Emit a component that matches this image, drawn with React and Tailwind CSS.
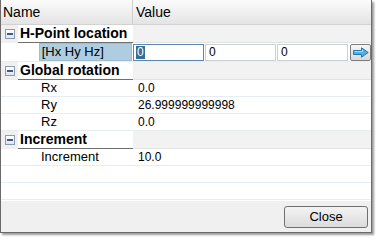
import React from 'react';

const Minus = () => (
  <div className="w-[10px] h-[10px] border border-[#8b9cb1] bg-linear-to-b from-white to-[#dfe5ec] flex items-center justify-center">
    <div className="w-[6px] h-[2px] bg-[#3a5a8c]" />
  </div>
);

const Category = ({ label }) => (
  <div className="flex h-[18px]">
    <div className="w-[17px] bg-[#f0f0f0] flex items-center justify-center">
      <Minus />
    </div>
    <div className="w-[115px] bg-white border-b border-[#6f6f6f] font-bold text-[14px] leading-[17px] pl-[2px] whitespace-nowrap">
      {label}
    </div>
    <div className="flex-1 bg-[#f2f2f2] border-b border-[#e2e2e2]" />
  </div>
);

const Item = ({ name, value }) => (
  <div className="flex h-[17px] border-b border-[#e6eef2] leading-[16px]">
    <div className="w-[132px] pl-[40px] text-[13px]">{name}</div>
    <div className="flex-1 pl-[5px] text-[12px]">{value}</div>
  </div>
);

const Field = ({ children, focused }) => (
  <div
    className={
      focused
        ? 'w-[71px] h-[17px] bg-white border border-[#5d86ad] flex items-center pl-[2px] text-[12px]'
        : 'w-[71px] h-[17px] bg-white border border-[#c9d0d6] flex items-center pl-[3px] text-[12px]'
    }
  >
    {children}
  </div>
);

const Arrow = () => (
  <svg width="16" height="11" viewBox="0 0 16 11">
    <path d="M0.5 3.5 H8.5 V0.8 L15.2 5.5 L8.5 10.2 V7.5 H0.5 Z" fill="#4fb0e4" stroke="#2377ad" strokeWidth="1" />
    <path d="M1.5 4.5 H9.5 V2.8" fill="none" stroke="#a9ddf6" strokeWidth="1" />
  </svg>
);

export default function App() {
  return (
    <div className="w-[379px] h-[240px] bg-white font-[family-name:'Liberation_Sans',Arial,sans-serif] text-black">
      <div className="w-[372px] h-[233px] flex flex-col border-l border-r border-b border-[#6a6a6a] shadow-[2px_2px_2px_rgba(0,0,0,0.4)]">
        {/* header */}
        <div className="flex h-[25px] bg-linear-to-b from-[#fbfbfb] to-[#e4e4e4] border-b border-[#d2d2d2] text-[14px] leading-[24px]">
          <div className="w-[132px] pl-[2px] border-r border-[#cfcfcf]">Name</div>
          <div className="flex-1 pl-[3px]">Value</div>
        </div>

        {/* grid */}
        <div className="flex-1 bg-white">
          <Category label="H-Point location" />
          <div className="flex h-[19px] items-center border-b border-[#e6eef2]">
            <div className="w-[38px]" />
            <div className="w-[94px] h-[18px] bg-[#afcde0] border border-[#9fbed2] text-[13px] leading-[16px] pl-[2px]">
              [Hx Hy Hz]
            </div>
            <div className="flex items-center gap-[1px] ml-[1px]">
              <Field focused>
                <span className="bg-[#3a6d99] text-white leading-[13px] px-[1px]">0</span>
              </Field>
              <Field>0</Field>
              <Field>0</Field>
              <div className="w-[21px] h-[17px] ml-[1px] rounded-[2px] border border-[#7d7d7d] bg-linear-to-b from-[#f6f6f6] to-[#d9d9d9] flex items-center justify-center">
                <Arrow />
              </div>
            </div>
          </div>
          <Category label="Global rotation" />
          <Item name="Rx" value="0.0" />
          <Item name="Ry" value="26.999999999998" />
          <Item name="Rz" value="0.0" />
          <Category label="Increment" />
          <Item name="Increment" value="10.0" />
          <div className="h-[17px] border-b border-[#e6eef2]" />
          <div className="h-[17px] border-b border-[#e6eef2]" />
        </div>

        {/* footer */}
        <div className="h-[31px] bg-[#f0f0f0] flex items-center justify-end pr-[3px]">
          <button className="w-[84px] h-[22px] rounded-[3px] border border-[#707070] bg-linear-to-b from-[#f3f3f3] to-[#dcdcdc] text-[13px] leading-[20px] text-center">
            Close
          </button>
        </div>
      </div>
    </div>
  );
}
